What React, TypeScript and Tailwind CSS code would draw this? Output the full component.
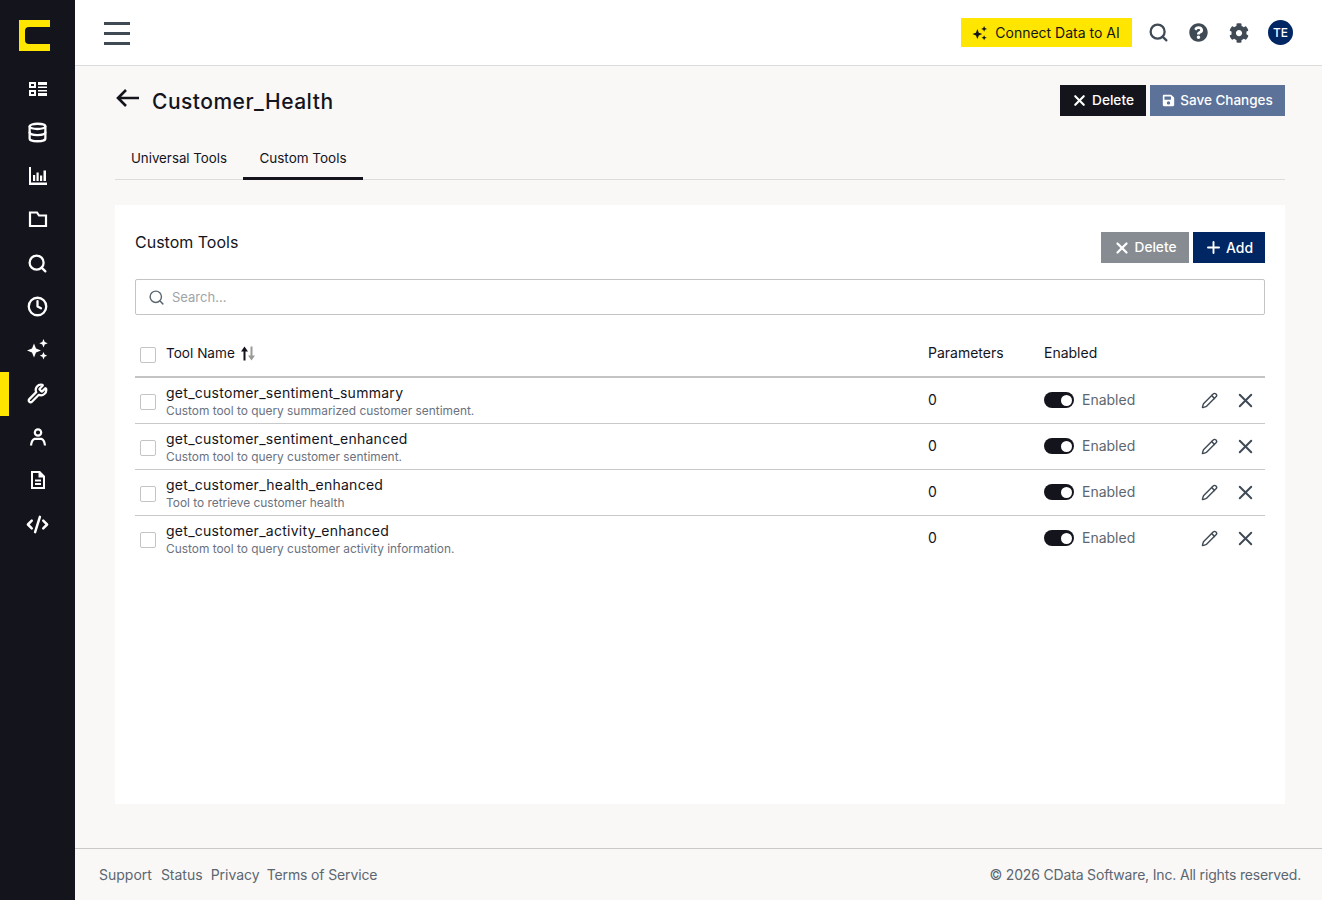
import { Clock, CodeXml, Database, Pencil, Plus, Search, Wrench, X } from "lucide-react";
import { FaCog, FaQuestionCircle, FaSave } from "react-icons/fa";

const tools = [
  { name: "get_customer_sentiment_summary", description: "Custom tool to query summarized customer sentiment." },
  { name: "get_customer_sentiment_enhanced", description: "Custom tool to query customer sentiment." },
  { name: "get_customer_health_enhanced", description: "Tool to retrieve customer health" },
  { name: "get_customer_activity_enhanced", description: "Custom tool to query customer activity information." },
];

// ===============================
// SIDEBAR ICONS
// ===============================

function DashboardIcon() {
  return (
    <svg width="20" height="20" viewBox="0 0 20 20" fill="white">
      <path fillRule="evenodd" d="M1 3h7v6H1V3zm2 2v2h3V5H3zM1 11h7v6H1v-6zm2 2v2h3v-2H3z" />
      <path d="M10 3h9v3h-9zM10 7.5h9V9h-9zM10 11h9v1.600h-9zM10 14h9v3h-9z" />
    </svg>
  );
}

function ChartIcon() {
  return (
    <svg width="20" height="20" viewBox="0 0 20 20" fill="white">
      <path d="M1 1h2v15.500h16V19H1z" />
      <path d="M5 9h2.200v6H5zM8.500 6.500h2.200v8.500H8.500zM12 9.500h2.200V15H12zM15.500 4.500h2.500V15h-2.500z" />
    </svg>
  );
}

function FolderIcon() {
  return (
    <svg width="20" height="20" viewBox="0 0 20 20" fill="none" stroke="white" strokeWidth="2.200">
      <path d="M2 2.500h7l2 3h7V16H2z" />
    </svg>
  );
}

function UserIcon() {
  return (
    <svg width="20" height="20" viewBox="0 0 20 20" fill="none" stroke="white" strokeWidth="2.200">
      <circle cx="10" cy="5.500" r="3.200" />
      <path d="M3 18.500c.4-3.600 1.600-6 3.600-6.600h6.800c2 .6 3.200 3 3.600 6.600" />
    </svg>
  );
}

function DocIcon() {
  return (
    <svg width="20" height="20" viewBox="0 0 20 20" fill="white" className="mb-[1px]">
      <path fillRule="evenodd" d="M3 1h9l5 5v13H3V1zm2 2v14h10V7.500h-4.500V3H5z" />
      <path d="M7 9.500h6v2H7zM7 13h6v2H7z" />
    </svg>
  );
}

function Sparkle({ color }: { color: string }) {
  return (
    <svg width="24" height="22" viewBox="0 0 24 22" fill={color} className="mb-[3px] mr-[2px]">
      <path d="M9 5.500l2 5 5 2-5 2-2 5-2-5-5-2 5-2z" />
      <path d="M18.500 1l1.200 3 3 1.200-3 1.200-1.200 3-1.200-3-3-1.200 3-1.200z" />
      <path d="M18.500 14l1.100 2.600 2.600 1.100-2.600 1.100-1.100 2.600-1.100-2.600-2.600-1.100 2.600-1.100z" />
    </svg>
  );
}

function Sidebar() {
  const iconProps = { size: 21, color: "white", strokeWidth: 2.6 };
  const items = [
    <DashboardIcon />,
    <Database {...iconProps} />,
    <ChartIcon />,
    <FolderIcon />,
    <Search {...iconProps} />,
    <Clock {...iconProps} />,
    <Sparkle color="white" />,
    <Wrench {...iconProps} />,
    <UserIcon />,
    <DocIcon />,
    <CodeXml {...iconProps} size={23} />,
  ];

  return (
    <aside className="w-[75px] shrink-0 bg-[#14141c]">
      <div className="flex h-[67.5px] items-center justify-center pr-[6px] pt-[4px]">
        <svg width="31" height="31" viewBox="0 0 31 31">
          <path fill="#ffe600" d="M0 0h31v7H10a4 4 0 0 0-4 4v9a4 4 0 0 0 4 4h21v7H0z" />
        </svg>
      </div>
      <div className="flex flex-col">
        {items.map((icon, i) => (
          <div
            key={i}
            className={`flex h-[43.5px] items-center justify-center ${
              i === 7 ? "border-l-[9px] border-[#ffe600] pr-[9px]" : ""
            }`}
          >
            {icon}
          </div>
        ))}
      </div>
    </aside>
  );
}

// ===============================
// TOP BAR
// ===============================

function TopBar() {
  return (
    <header className="flex h-[66px] shrink-0 items-center justify-between border-b border-[#dcdcdc] bg-white pl-[29px] pr-[29px]">
      <svg width="26" height="24" viewBox="0 0 26 24" stroke="#3f4a55" strokeWidth="3" className="mt-[1px]">
        <path d="M0 2.500h26M0 12.500h26M0 22.500h26" />
      </svg>
      <div className="flex items-center">
        <button className="flex h-[29px] w-[171px] items-center justify-center gap-[7px] bg-[#ffe600] pr-[2px] text-[14px] text-[#14141c]">
          <svg width="17" height="16" viewBox="0 0 24 22" fill="#14141c">
            <path d="M9 5.500l2 5 5 2-5 2-2 5-2-5-5-2 5-2z" />
            <path d="M18.500 1l1.200 3 3 1.200-3 1.200-1.200 3-1.200-3-3-1.200 3-1.200z" />
            <path d="M18.500 14l1.100 2.600 2.600 1.100-2.600 1.100-1.100 2.600-1.100-2.600-2.600-1.100 2.600-1.100z" />
          </svg>
          Connect Data to AI
        </button>
        <Search size={21} color="#3f4a55" strokeWidth={2.6} className="ml-[16px]" />
        <FaQuestionCircle size={19} color="#3f4a55" className="ml-[20px]" />
        <FaCog size={20} color="#3f4a55" className="ml-[21px]" />
        <div className="ml-[19px] flex h-[25px] w-[25px] items-center justify-center rounded-full bg-[#002663] text-[12px] font-medium text-white">
          TE
        </div>
      </div>
    </header>
  );
}

// ===============================
// TOOL ROW
// ===============================

function ToolRow({ tool }: { tool: { name: string; description: string } }) {
  return (
    <div className="flex h-[46px] items-center border-b border-[#c9c9c9] pb-[1px] pl-[5px] last:border-transparent">
      <div className="mt-[3px] h-4 w-4 shrink-0 rounded-[2px] border border-[#c4c4c4] bg-white" />
      <div className="ml-[10px] w-[762px] pt-[4px]">
        <div className="text-[14px] leading-[18px] tracking-[0.27px] text-[#14141c]">{tool.name}</div>
        <div className="text-[11.9px] leading-[18px] text-[#6b7280]">{tool.description}</div>
      </div>
      <div className="mb-[1px] w-[116px] text-[14px] text-[#14141c]">0</div>
      <div className="flex w-[157px] items-center">
        <div className="flex h-[16px] w-[30px] items-center justify-end rounded-full bg-[#14141c] pr-[2px]">
          <div className="h-[11px] w-[11px] rounded-full bg-white" />
        </div>
        <span className="mb-[1px] ml-[8px] text-[14px] text-[#5c6670]">Enabled</span>
      </div>
      <Pencil size={17} color="#3f4a55" strokeWidth={2} />
      <X size={23} color="#3f4a55" strokeWidth={2} className="ml-[16px]" />
    </div>
  );
}

export default function App() {
  return (
    <div className="flex h-[900px] w-[1322px] overflow-hidden font-['Inter',sans-serif]">
      <Sidebar />
      <div className="flex min-w-0 flex-1 flex-col bg-[#f9f8f7]">
        <TopBar />

        <main className="flex-1 pl-[40px] pr-[37px]">
          {/* title row */}
          <div className="mt-[19px] flex h-[31px] items-center justify-between">
            <div className="flex items-center">
              <svg width="23" height="20" viewBox="0 0 23 20" fill="none" stroke="#14141c" strokeWidth="2.600" className="mb-[5px] ml-[1px]">
                <path d="M23 10H2M10 2l-8 8 8 8" />
              </svg>
              <h1 className="ml-[13px] pt-[3px] text-[21px] font-medium tracking-[0.5px] text-[#14141c]">Customer_Health</h1>
            </div>
            <div className="flex gap-[4px]">
              <button className="flex h-[31px] w-[86px] items-center justify-center gap-[4px] bg-[#14141c] pr-[1px] text-[13.7px] font-medium text-white">
                <X size={17} strokeWidth={3} />
                Delete
              </button>
              <button className="flex h-[31px] w-[135px] items-center justify-center gap-[5px] bg-[#5c7299] text-[13.5px] font-medium text-white">
                <FaSave size={13} color="white" />
                Save Changes
              </button>
            </div>
          </div>

          {/* tabs */}
          <div className="mt-[21px] flex h-[43px] border-b border-[#dcdcdc] text-[13.3px] text-[#14141c]">
            <div className="flex w-[128px] items-center justify-center pt-[1px]">Universal Tools</div>
            <div className="flex h-[43px] w-[120px] items-center justify-center border-b-[3px] border-[#14141c] pt-[3px] text-[13.5px]">Custom Tools</div>
          </div>

          {/* card */}
          <section className="mt-[25px] h-[599px] bg-white px-[20px]">
            <div className="flex h-[74px] items-start justify-between pt-[27px]">
              <h2 className="mt-[-2px] text-[16px] text-[#14141c]">Custom Tools</h2>
              <div className="flex gap-[4px]">
                <button className="flex h-[31px] w-[88px] items-center justify-center gap-[4px] bg-[#868c92] pr-[1px] text-[13.7px] font-medium text-white">
                  <X size={18} strokeWidth={3} />
                  Delete
                </button>
                <button className="flex h-[31px] w-[72px] items-center justify-center gap-[3px] bg-[#002663] pr-[1px] text-[14px] font-medium text-white">
                  <Plus size={19} strokeWidth={2.4} />
                  Add
                </button>
              </div>
            </div>

            <div className="flex h-[36px] items-center rounded-[2px] border border-[#c4c4c4] pl-[12px]">
              <Search size={17} color="#5c6670" strokeWidth={2} />
              <span className="ml-[7px] pt-[1px] text-[13px] text-[#a0a4a8]">Search...</span>
            </div>

            <div className="mt-[20px] flex h-[43px] items-center border-b-2 border-[#c4c4c4] pb-[4px] pl-[5px] text-[13.6px] text-[#14141c]">
              <div className="mt-[2px] h-4 w-4 rounded-[2px] border border-[#c4c4c4] bg-white" />
              <div className="ml-[10px] flex w-[762px] items-center gap-[5px]">
                Tool Name
                <svg width="16" height="15" viewBox="0 0 16 14">
                  <path d="M4.500 0L8 5H5.500v9h-2V5H1z" fill="#14141c" />
                  <path d="M10.500 0h2v9H15l-3.500 5L8 9h2.500z" fill="#9a9a9a" />
                </svg>
              </div>
              <div className="mb-[2px] w-[116px] text-[14px]">Parameters</div>
              <div className="mb-[2px] text-[14px]">Enabled</div>
            </div>

            {tools.map((tool) => (
              <ToolRow key={tool.name} tool={tool} />
            ))}
          </section>
        </main>

        <footer className="flex h-[52px] shrink-0 items-center justify-between border-t border-[#c9c9c9] pl-[24px] pr-[21px] text-[14px] text-[#5c6670]">
          <div className="flex gap-[8px]">
            <span className="mr-[1px]">Support</span>
            <span>Status</span>
            <span className="mr-[-1px]">Privacy</span>
            <span className="tracking-[-0.13px]">Terms of Service</span>
          </div>
          <span className="tracking-[-0.17px]">© 2026 CData Software, Inc. All rights reserved.</span>
        </footer>
      </div>
    </div>
  );
}
